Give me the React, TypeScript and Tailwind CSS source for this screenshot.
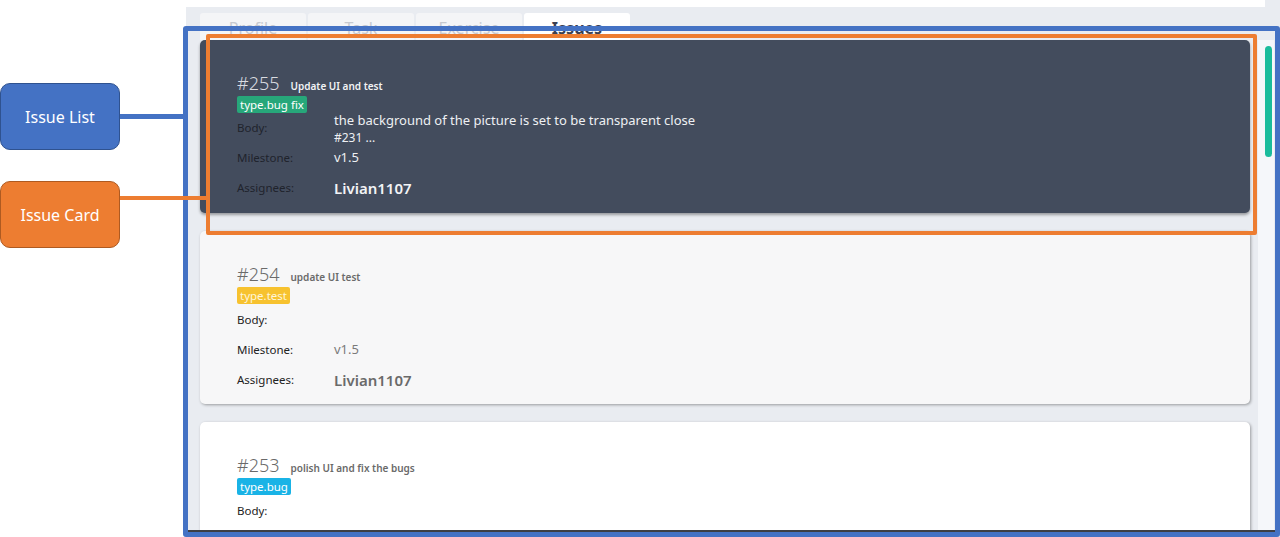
type Issue = {
  num: number;
  title: string;
  tag: string;
  tagClass: string;
  body: string[];
  milestone: string;
  assignee: string;
  dark?: boolean;
};

const issues: Issue[] = [
  {
    num: 255,
    title: "Update UI and test",
    tag: "type.bug fix",
    tagClass: "bg-[#27a77a] text-white",
    body: ["the background of the picture is set to be transparent close", "#231 ..."],
    milestone: "v1.5",
    assignee: "Livian1107",
    dark: true,
  },
  {
    num: 254,
    title: "update UI test",
    tag: "type.test",
    tagClass: "bg-[#f7c22f] text-[#fff6da]",
    body: [],
    milestone: "v1.5",
    assignee: "Livian1107",
  },
  {
    num: 253,
    title: "polish UI and fix the bugs",
    tag: "type.bug",
    tagClass: "bg-[#19b3e6] text-white",
    body: [],
    milestone: "v1.5",
    assignee: "Livian1107",
  },
];

const tabs = ["Profile", "Task", "Exercise", "Issues"];

function Row({ label, dark, children }: { label: string; dark?: boolean; children?: React.ReactNode }) {
  return (
    <div className="flex h-[30px] items-center">
      <span
        className={`w-[97px] shrink-0 text-[11.5px] ${dark ? "text-[#1f232c]" : "text-[#222]"}`}
      >
        {label}
      </span>
      {children}
    </div>
  );
}

function IssueCard({ issue }: { issue: Issue }) {
  const d = issue.dark;
  return (
    <div
      className={`h-[173px] shrink-0 rounded-[5px] pl-[37px] pr-6 pt-[32px] ${
        d
          ? "bg-[#434c5d] shadow-[0_2px_3px_rgba(0,0,0,0.35)]"
          : issue.num === 254
          ? "bg-[#f7f7f8] shadow-[1px_1px_3px_rgba(0,0,0,0.35)]"
          : "bg-white shadow-[1px_1px_3px_rgba(0,0,0,0.35)]"
      }`}
    >
      <div className="flex h-[22px] items-baseline gap-[11px]">
        <span
          className={`text-[18px] font-light leading-[22px] ${
            d ? "text-[#d9dce1]" : "text-[#6a6a6a]"
          }`}
        >
          #{issue.num}
        </span>
        <span
          className={`text-[10px] font-semibold ${d ? "text-[#f2f3f5]" : "text-[#6a6a6a]"}`}
        >
          {issue.title}
        </span>
      </div>
      <div className="mt-[2px] flex">
        <span
          className={`rounded-[2px] px-[3px] text-[11.5px] leading-[17px] ${issue.tagClass}`}
        >
          {issue.tag}
        </span>
      </div>
      <div className={d ? "" : "mt-[1px]"}>
        <Row label="Body:" dark={d}>
          {issue.body.length > 0 && (
            <div className="flex flex-col text-[#eef0f3]">
              <span className="text-[13px] leading-[18px]">{issue.body[0]}</span>
              <span className="text-[12px] leading-[17px]">{issue.body[1]}</span>
            </div>
          )}
        </Row>
        <Row label="Milestone:" dark={d}>
          <span className={`text-[13px] ${d ? "text-[#eef0f3]" : "text-[#7a7a7a]"}`}>
            {issue.milestone}
          </span>
        </Row>
        <Row label="Assignees:" dark={d}>
          <span
            className={`text-[15px] font-semibold ${d ? "text-[#f2f3f5]" : "text-[#6a6a6a]"}`}
          >
            {issue.assignee}
          </span>
        </Row>
      </div>
    </div>
  );
}

export default function App() {
  return (
    <div
      className="relative flex h-[537px] w-[1280px] overflow-hidden bg-white"
      style={{ fontFamily: '"Noto Sans", "Open Sans", sans-serif' }}
    >
      <div className="w-[186px] shrink-0" />
      <div className="flex min-w-0 flex-1 flex-col bg-[#e9ecf1]">
        <div className="mr-[15px] h-[7px] shrink-0 bg-white" />
        <div className="mt-[6px] flex h-[27px] shrink-0 gap-[2px] pl-[14px]">
          {tabs.map((t) => (
            <div
              key={t}
              className={`flex w-[106px] items-start justify-center rounded-t-[3px] pt-[3px] text-[16px] ${
                t === "Issues"
                  ? "bg-white font-bold text-[#3b4050]"
                  : "bg-[#f4f5f7] text-[#c6c9cf]"
              }`}
            >
              {t}
            </div>
          ))}
        </div>
        <div className="flex min-h-0 flex-1 pr-[6px]">
          <div className="flex min-w-0 flex-1 flex-col gap-[18px] overflow-hidden pl-[14px] pr-[8px]">
            {issues.map((i) => (
              <IssueCard key={i.num} issue={i} />
            ))}
          </div>
          <div className="w-[16px] shrink-0 bg-[#f5f7fa] pl-[7px] pt-[6px]">
            <div className="h-[111px] w-[7px] rounded-full bg-[#1abc9c]" />
          </div>
        </div>
        <div className="h-[2px] shrink-0 bg-[#3d3f45]" />
        <div className="h-[5px] shrink-0" />
      </div>

      {/* annotations */}
      <div className="absolute left-[183px] top-[26px] h-[511px] w-[1097px] rounded-[3px] border-[5px] border-[#4472c4]" />
      <div className="absolute left-[206px] top-[34px] h-[201px] w-[1051px] rounded-[2px] border-[4px] border-[#ed7d31]" />
      <div className="absolute left-[119px] top-[114px] h-[5px] w-[66px] bg-[#4472c4]" />
      <div className="absolute left-[119px] top-[196px] h-[4px] w-[89px] bg-[#ed7d31]" />
      <div className="absolute left-0 top-[83px] flex h-[67px] w-[120px] items-center justify-center rounded-[10px] border border-[#2f528f] bg-[#4472c4] text-[16px] text-white">
        Issue List
      </div>
      <div className="absolute left-0 top-[181px] flex h-[67px] w-[120px] items-center justify-center rounded-[10px] border border-[#ae5a21] bg-[#ed7d31] text-[16px] text-white">
        Issue Card
      </div>
    </div>
  );
}
